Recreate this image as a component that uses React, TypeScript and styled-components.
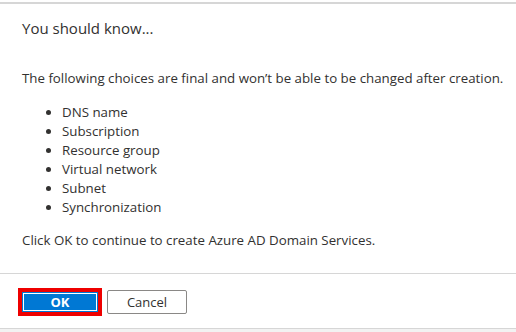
import React from 'react'
import styled, { createGlobalStyle } from 'styled-components'

const GlobalStyle = createGlobalStyle`
  html, body {
    margin: 0;
    padding: 0;
    background: #ffffff;
  }
  body {
    font-family: 'Open Sans', 'Noto Sans', 'Liberation Sans', sans-serif;
    color: #323130;
  }
`

const Page = styled.div`
  width: 516px;
  height: 332px;
  overflow: hidden;
  padding-top: 2px;
  box-sizing: border-box;
  display: flex;
  flex-direction: column;
`

const Panel = styled.section`
  border-top: 2px solid #d6d6d6;
  display: flex;
  flex-direction: column;
`

const Body = styled.div`
  padding: 14px 22px 0;
  display: flex;
  flex-direction: column;
`

const Title = styled.h2`
  margin: 0;
  font-size: 15px;
  font-weight: 400;
  line-height: 20px;
`

const Text = styled.p<{ $top: number }>`
  margin: ${(p) => p.$top}px 0 0;
  font-size: 13.3px;
  line-height: 19px;
  white-space: nowrap;
`

const Choices = styled.ul`
  margin: 15px 0 0;
  padding-left: 40px;
  font-size: 13.3px;
  line-height: 19px;
`

const Footer = styled.footer`
  margin-top: 23px;
  border-top: 1px solid #d6d6d6;
  border-bottom: 1px solid #d6d6d6;
  padding: 16px 20px 14px;
  display: flex;
  gap: 7px;
`

const Button = styled.button<{ $primary?: boolean }>`
  width: 80px;
  height: 24px;
  box-sizing: border-box;
  font-family: inherit;
  font-size: 13px;
  padding: 0;
  cursor: pointer;
  border-radius: ${(p) => (p.$primary ? 0 : 2)}px;
  background: ${(p) => (p.$primary ? '#0078d4' : '#ffffff')};
  color: ${(p) => (p.$primary ? '#ffffff' : '#323130')};
  font-weight: ${(p) => (p.$primary ? 700 : 400)};
  border: 1px solid ${(p) => (p.$primary ? '#0078d4' : '#8a8886')};
  ${(p) =>
    p.$primary &&
    `
    outline: 4px solid #ee0000;
    outline-offset: -2px;
    box-shadow: inset 0 0 0 2px #0078d4, inset 0 0 0 3px #ffffff;
  `}
`

const Below = styled.div`
  flex: 1;
  background: #f2f2f2;
  padding: 0 22px;
  font-size: 13.3px;
  line-height: 19px;
`

const items = ['DNS name', 'Subscription', 'Resource group', 'Virtual network', 'Subnet', 'Synchronization']

export default function App() {
  return (
    <Page>
      <GlobalStyle />
      <Panel>
        <Body>
          <Title>You should know...</Title>
          <Text $top={31}>The following choices are final and won’t be able to be changed after creation.</Text>
          <Choices>
            {items.map((item) => (
              <li key={item}>{item}</li>
            ))}
          </Choices>
          <Text $top={14}>Click OK to continue to create Azure AD Domain Services.</Text>
        </Body>
        <Footer>
          <Button $primary>OK</Button>
          <Button>Cancel</Button>
        </Footer>
      </Panel>
      <Below>Administrator</Below>
    </Page>
  )
}
